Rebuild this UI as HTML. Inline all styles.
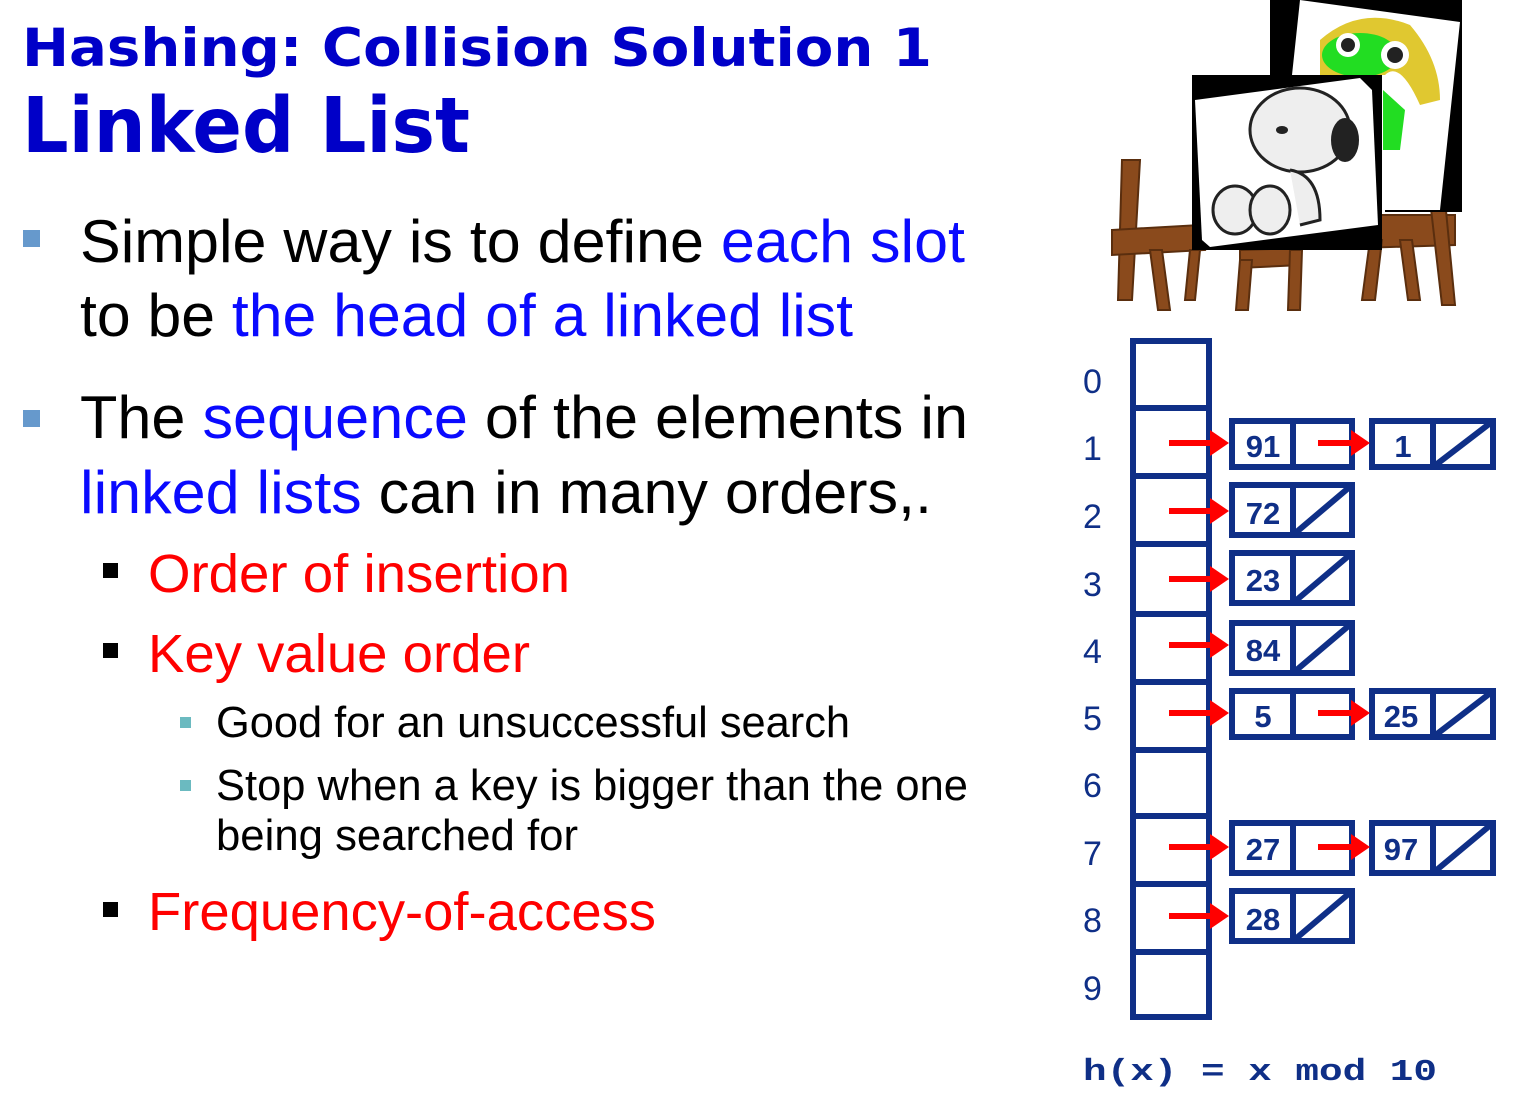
<!DOCTYPE html>
<html><head><meta charset="utf-8"><style>
html,body{margin:0;padding:0;background:#fff;width:1538px;height:1102px;overflow:hidden}
svg{display:block}
</style></head><body>
<svg width="1538" height="1102" viewBox="0 0 1538 1102" xmlns="http://www.w3.org/2000/svg">
<g font-family="'DejaVu Sans',Verdana,sans-serif" font-weight="bold" fill="#0000c8">
<text x="22" y="66" font-size="53" textLength="910" lengthAdjust="spacingAndGlyphs">Hashing: Collision Solution 1</text>
<text x="22" y="152" font-size="77" textLength="448" lengthAdjust="spacingAndGlyphs">Linked List</text>
</g>
<rect x="23" y="230" width="17" height="17" fill="#6699cc"/>
<rect x="23" y="410" width="17" height="17" fill="#6699cc"/>
<rect x="103" y="563" width="15" height="15" fill="#000"/>
<rect x="103" y="643" width="15" height="15" fill="#000"/>
<rect x="103" y="902" width="15" height="15" fill="#000"/>
<rect x="180" y="717" width="11" height="11" fill="#6bbac0"/>
<rect x="180" y="780" width="11" height="11" fill="#6bbac0"/>
<g font-family="'Liberation Sans',Arial,sans-serif">
<text x="80" y="262" font-size="60" textLength="885" lengthAdjust="spacingAndGlyphs" fill="#000">Simple way is to define <tspan fill="#0a0aff">each slot</tspan></text>
<text x="80" y="336" font-size="60" textLength="773" lengthAdjust="spacingAndGlyphs" fill="#000">to be <tspan fill="#0a0aff">the head of a linked list</tspan></text>
<text x="80" y="438" font-size="60" textLength="888" lengthAdjust="spacingAndGlyphs" fill="#000">The <tspan fill="#0a0aff">sequence</tspan> of the elements in</text>
<text x="80" y="513" font-size="60" textLength="852" lengthAdjust="spacingAndGlyphs" fill="#000"><tspan fill="#0a0aff">linked lists</tspan> can in many orders,.</text>
<text x="148" y="592" font-size="54" textLength="422" lengthAdjust="spacingAndGlyphs" fill="#ff0000">Order of insertion</text>
<text x="148" y="672" font-size="54" textLength="382" lengthAdjust="spacingAndGlyphs" fill="#ff0000">Key value order</text>
<text x="216" y="737" font-size="44" textLength="634" lengthAdjust="spacingAndGlyphs" fill="#000">Good for an unsuccessful search</text>
<text x="216" y="800" font-size="44" textLength="752" lengthAdjust="spacingAndGlyphs" fill="#000">Stop when a key is bigger than the one</text>
<text x="216" y="850" font-size="44" textLength="362" lengthAdjust="spacingAndGlyphs" fill="#000">being searched for</text>
<text x="148" y="930" font-size="54" textLength="508" lengthAdjust="spacingAndGlyphs" fill="#ff0000">Frequency-of-access</text>
</g>
<!-- pictures -->
<g>
<g fill="#8a4a1c" stroke="#5a2e0e" stroke-width="2">
<path d="M1122 160 L1140 160 L1132 300 L1118 300 Z"/><path d="M1112 230 L1200 225 L1205 250 L1112 255 Z"/>
<path d="M1150 250 L1162 250 L1170 310 L1158 310 Z"/><path d="M1190 250 L1200 250 L1195 300 L1185 300 Z"/>
<path d="M1240 250 L1300 248 L1300 265 L1240 268 Z"/><path d="M1240 260 L1252 260 L1248 310 L1236 310 Z"/>
<path d="M1290 250 L1302 250 L1300 310 L1288 310 Z"/>
<path d="M1360 215 L1455 215 L1455 245 L1360 248 Z"/><path d="M1370 240 L1382 240 L1375 300 L1362 300 Z"/>
<path d="M1430 200 L1445 200 L1455 305 L1442 305 Z"/><path d="M1400 240 L1412 240 L1420 300 L1408 300 Z"/>
</g>
<polygon points="1270,0 1462,0 1462,212 1385,212 1385,75 1270,75" fill="#000"/>
<polygon points="1300,0 1460,22 1440,210 1383,210 1383,75 1292,75" fill="#fff"/>
<path d="M1320 40 Q1360 5 1410 25 Q1440 60 1440 100 L1420 105 Q1400 60 1385 75 L1320 75 Z" fill="#e0c830"/>
<ellipse cx="1360" cy="55" rx="38" ry="22" fill="#22dd22"/>
<circle cx="1348" cy="45" r="12" fill="#fff"/><circle cx="1348" cy="45" r="7" fill="#222"/>
<circle cx="1395" cy="55" r="14" fill="#fff"/><circle cx="1395" cy="55" r="8" fill="#222"/>
<path d="M1383 90 L1405 110 L1400 150 L1383 150 Z" fill="#22dd22"/>
<rect x="1192" y="75" width="190" height="175" fill="#000"/>
<polygon points="1195,100 1360,78 1372,90 1378,225 1210,247 1202,240" fill="#fff"/>
<ellipse cx="1300" cy="130" rx="50" ry="42" fill="#eee" stroke="#222" stroke-width="3"/>
<ellipse cx="1345" cy="140" rx="14" ry="22" fill="#222"/>
<ellipse cx="1282" cy="130" rx="6" ry="4" fill="#222"/>
<ellipse cx="1235" cy="210" rx="22" ry="24" fill="#eee" stroke="#222" stroke-width="3"/>
<ellipse cx="1270" cy="210" rx="20" ry="24" fill="#eee" stroke="#222" stroke-width="3"/>
<path d="M1290 170 Q1320 175 1320 220 L1300 225" fill="#eee" stroke="#222" stroke-width="3"/>
</g>
<!-- hash table -->
<g font-family="'Liberation Sans',Arial,sans-serif" font-size="34" fill="#0f2f87">
<text x="1083" y="393">0</text><text x="1083" y="460">1</text><text x="1083" y="528">2</text>
<text x="1083" y="596">3</text><text x="1083" y="663">4</text><text x="1083" y="730">5</text>
<text x="1083" y="797">6</text><text x="1083" y="865">7</text><text x="1083" y="932">8</text>
<text x="1083" y="1000">9</text>
</g>
<g fill="none" stroke="#0f2f87" stroke-width="6">
<rect x="1133" y="341" width="76" height="676"/>
<path d="M1133 408H1209M1133 476H1209M1133 544H1209M1133 614H1209M1133 682H1209M1133 750H1209M1133 816H1209M1133 884H1209M1133 952H1209"/>
<!-- nodes col1 -->
<rect x="1232" y="421" width="120" height="46"/><path d="M1293 421V467"/>
<rect x="1232" y="485" width="120" height="50"/><path d="M1293 485V535M1293 535L1352 485"/>
<rect x="1232" y="553" width="120" height="50"/><path d="M1293 553V603M1293 603L1352 553"/>
<rect x="1232" y="623" width="120" height="50"/><path d="M1293 623V673M1293 673L1352 623"/>
<rect x="1232" y="691" width="120" height="46"/><path d="M1293 691V737"/>
<rect x="1232" y="823" width="120" height="50"/><path d="M1293 823V873"/>
<rect x="1232" y="891" width="120" height="50"/><path d="M1293 891V941M1293 941L1352 891"/>
<!-- col2 -->
<rect x="1372" y="421" width="121" height="46"/><path d="M1433 421V467M1433 467L1493 421"/>
<rect x="1372" y="691" width="121" height="46"/><path d="M1433 691V737M1433 737L1493 691"/>
<rect x="1372" y="823" width="121" height="50"/><path d="M1433 823V873M1433 873L1493 823"/>
</g>
<g font-family="'Liberation Sans',Arial,sans-serif" font-weight="bold" font-size="31" fill="#0f2f87" text-anchor="middle">
<text x="1263" y="457">91</text><text x="1403" y="457">1</text>
<text x="1263" y="524">72</text><text x="1263" y="591">23</text><text x="1263" y="661">84</text>
<text x="1263" y="727">5</text><text x="1401" y="727">25</text>
<text x="1263" y="860">27</text><text x="1401" y="860">97</text>
<text x="1263" y="930">28</text>
</g>
<g fill="#ff0000">
<path id="a" d="M1169 440h41v-10l19 13l-19 13v-10h-41z"/>
<use href="#a" y="68"/><use href="#a" y="136"/><use href="#a" y="202"/><use href="#a" y="270"/><use href="#a" y="404"/><use href="#a" y="473"/>
<path id="b" d="M1318 440h33v-10l19 13l-19 13v-10h-33z"/>
<use href="#b" y="270"/><use href="#b" y="404"/>
</g>
<text x="1083" y="1080" font-family="'Liberation Mono',monospace" font-weight="bold" font-size="31" fill="#0f2f87" textLength="354" lengthAdjust="spacingAndGlyphs" xml:space="preserve">h(x) = x mod 10</text>
</svg>
</body></html>
